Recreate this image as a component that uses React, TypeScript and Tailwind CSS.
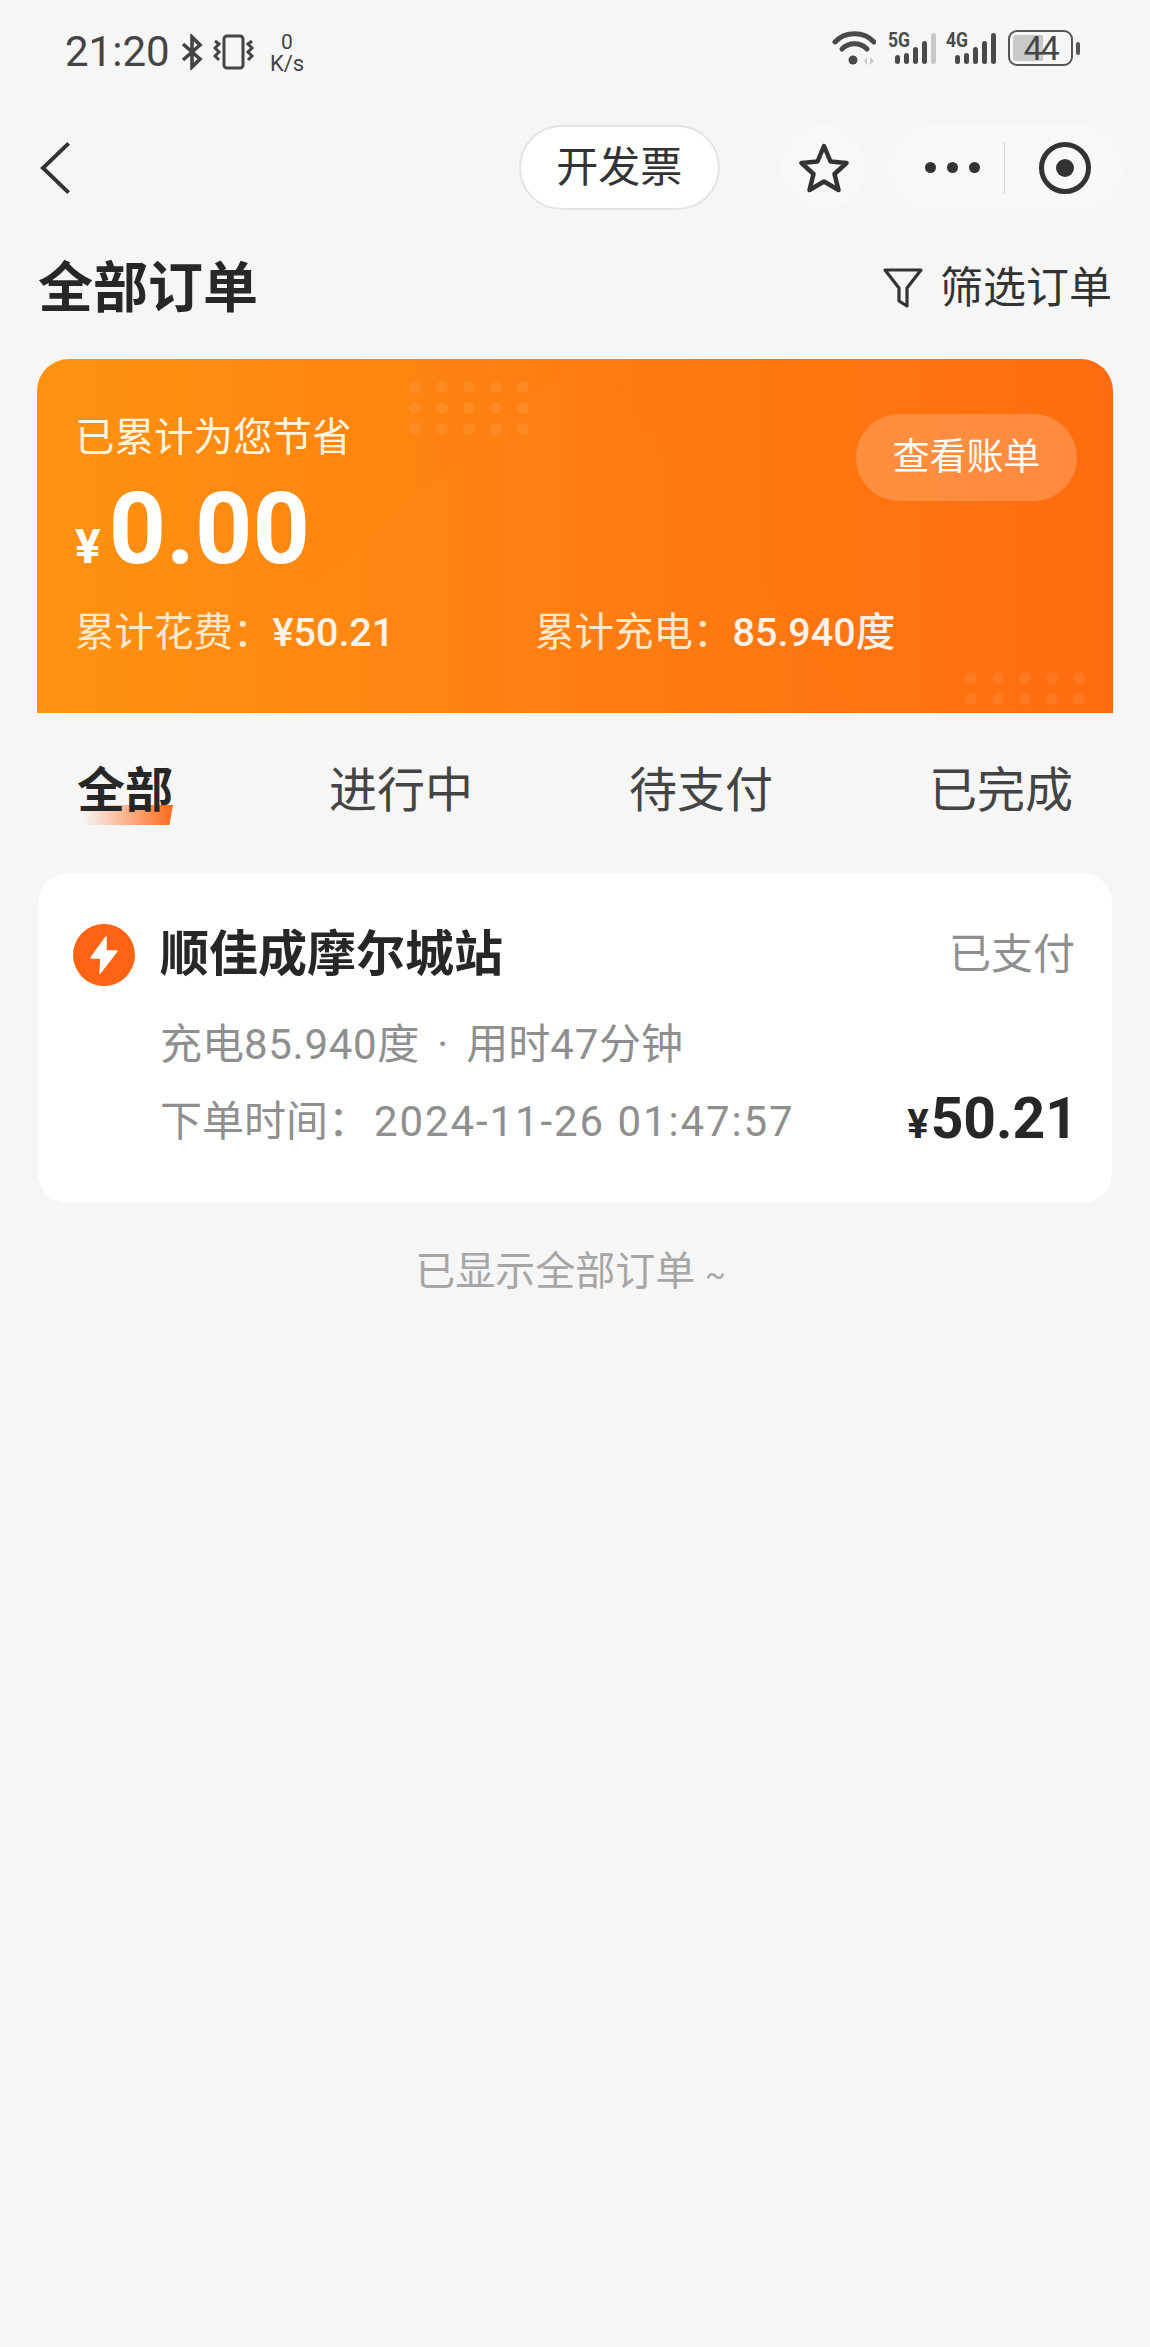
const cjk = "font-['Roboto','Noto_Sans_CJK_SC',sans-serif]"

function Dots({ className }: { className: string }) {
  return (
    <div className={`absolute grid grid-cols-5 gap-x-[15px] gap-y-[9px] ${className}`}>
      {Array.from({ length: 15 }).map((_, i) => (
        <span key={i} className="w-[12px] h-[12px] rounded-full bg-white/[0.08]" />
      ))}
    </div>
  )
}

function Signal({ label, dim }: { label: string; dim?: boolean }) {
  return (
    <svg width="48" height="36" viewBox="0 0 48 36" className="block overflow-visible">
      <text x={label === '4G' ? -2 : 0} y="17" fontSize="21" fontWeight="700" fill="#4a4a4a" fontFamily="Roboto" textLength="22" lengthAdjust="spacingAndGlyphs">{label}</text>
      <rect x="7" y="25" width="5" height="9" rx="2.5" fill="#4a4a4a" />
      <rect x="16" y="23" width="5" height="11" rx="2.5" fill="#4a4a4a" />
      <rect x="25" y="17" width="5" height="17" rx="2.5" fill="#4a4a4a" />
      <rect x="34" y="11" width="5" height="23" rx="2.5" fill="#4a4a4a" />
      <rect x="43" y="3" width="5" height="31" rx="2.5" fill={dim ? '#c9c9c9' : '#4a4a4a'} />
    </svg>
  )
}

function StatusBar() {
  return (
    <div className="h-[83px] pt-[29px] pl-[65px] pr-[70px] flex items-start justify-between text-[#444]">
      <div className="flex items-center">
        <span className="font-['Roboto',sans-serif] text-[42px] leading-[40px] w-[116px]">21:20</span>
        <svg width="22" height="36" viewBox="0 0 22 36" fill="none" stroke="#444" strokeWidth="3.6">
          <path d="M2 10 L19 25 L11 33 V3 L19 11 L2 26" />
        </svg>
        <svg width="42" height="36" viewBox="0 0 42 36" fill="none" stroke="#444" strokeWidth="3" className="ml-[10px]">
          <rect x="11" y="2" width="19" height="32" rx="3" />
          <path d="M2 7 L6 10 L2 14 L6 18 L2 22 L6 26 M39 7 L35 10 L39 14 L35 18 L39 22 L35 26" />
        </svg>
        <div className="ml-[15px] w-[34px] flex flex-col items-center font-['Roboto',sans-serif] text-[21px] leading-[22px] mt-[2px]">
          <span>0</span>
          <span className="text-[22px]">K/s</span>
        </div>
      </div>
      <div className="flex items-center gap-[12px] mt-[1px]">
        <svg width="44" height="36" viewBox="0 0 44 36" fill="none" stroke="#4a4a4a" strokeWidth="5" strokeLinecap="round">
          <path d="M3 12 C13 1 32 1 42 12" />
          <path d="M10 19 C17 12 28 12 35 19" />
          <circle cx="21" cy="30" r="4.5" fill="#4a4a4a" stroke="none" />
          <path d="M32 31 L35 27 V35 Z M38 27 V35 L42 31 Z" fill="#c9c9c9" stroke="none" />
        </svg>
        <Signal label="5G" dim />
        <Signal label="4G" />
        <div className="flex items-center">
          <div className="relative w-[65px] h-[36px] border-[2.5px] border-[#555] rounded-[9px] flex items-center justify-center">
            <span className="absolute left-[3px] top-[3px] bottom-[3px] w-[30px] bg-[#c9c9c9] rounded-l-[3px]" />
            <span className="relative font-['Roboto',sans-serif] text-[34px] leading-none tracking-[-2px]">44</span>
          </div>
          <span className="ml-[3px] w-[4px] h-[13px] rounded-full bg-[#555]" />
        </div>
      </div>
    </div>
  )
}

function NavBar() {
  return (
    <div className="h-[85px] mt-[42px] pl-[38px] pr-[27px] flex items-center">
      <svg width="34" height="54" viewBox="0 0 34 54" fill="none" stroke="#333" strokeWidth="4">
        <path d="M31 2 L5 27 L31 52" />
      </svg>
      <button className={`ml-[447px] w-[204px] h-[85px] rounded-full bg-white border-[2px] border-[#e4e4e4] text-[#333] text-[42px] leading-none ${cjk}`}>
        开发票
      </button>
      <div className="ml-[61px] w-[86px] h-[85px] rounded-full bg-[#f8f8f8] flex items-center justify-center">
        <svg width="50" height="50" viewBox="0 0 50 50" fill="none" stroke="#333" strokeWidth="4.5" strokeLinejoin="round">
          <path d="M25 3 L31.5 18.5 L47.5 20 L35.5 31 L39.5 47 L25 38.5 L10.5 47 L14.5 31 L2.5 20 L18.5 18.5 Z" />
        </svg>
      </div>
      <div className="ml-[22px] w-[238px] h-[85px] rounded-full bg-[#f8f8f8] flex items-center">
        <div className="ml-[37px] flex gap-[11px]">
          <span className="w-[11px] h-[11px] rounded-full bg-[#333]" />
          <span className="w-[11px] h-[11px] rounded-full bg-[#333]" />
          <span className="w-[11px] h-[11px] rounded-full bg-[#333]" />
        </div>
        <span className="ml-[24px] w-px h-[52px] bg-[#d6d6d6]" />
        <span className="ml-[34px] w-[52px] h-[52px] rounded-full border-[5px] border-[#333] flex items-center justify-center">
          <span className="w-[18px] h-[18px] rounded-full bg-[#333]" />
        </span>
      </div>
    </div>
  )
}

function Tab({ label, active }: { label: string; active?: boolean }) {
  return (
    <div className={`relative text-[48px] leading-[60px] ${active ? 'font-bold text-[#272727]' : 'text-[#444]'}`}>
      {active && (
        <span className="absolute left-[6px] bottom-[-4px] w-[90px] h-[20px] bg-gradient-to-r from-[#ff6a1a00] to-[#ff6a1a] [clip-path:polygon(0_0,100%_0,96%_100%,0_100%)]" />
      )}
      <span className="relative">{label}</span>
    </div>
  )
}

export default function App() {
  return (
    <div className={`w-[1150px] h-[2347px] bg-[#f6f6f6] overflow-hidden ${cjk}`}>
      <StatusBar />
      <NavBar />

      <div className="mt-[43px] px-[38px] flex items-center justify-between">
        <h1 className="text-[55px] leading-[70px] font-bold text-[#272727]">全部订单</h1>
        <div className="flex items-center gap-[16px] text-[#333] text-[43px] leading-[60px]">
          <svg width="42" height="44" viewBox="0 0 42 44" fill="none" stroke="#333" strokeWidth="3.2" strokeLinejoin="round">
            <path d="M3 4 H39 L25 22 V40 L17 35 V22 Z" />
          </svg>
          <span>筛选订单</span>
        </div>
      </div>

      <div className="relative mx-[37px] mt-[36px] h-[354px] rounded-t-[32px] overflow-hidden bg-gradient-to-r from-[#ff9210] via-[#ff7d10] to-[#ff6c0f] text-white">
        <div className="absolute inset-0 bg-white/[0.012] [clip-path:polygon(12%_100%,50%_0,52%_0,76%_100%)]" />
        <Dots className="left-[372px] top-[22px]" />
        <Dots className="left-[928px] top-[313px]" />
        <div className="absolute right-[36px] top-[55px] w-[221px] h-[87px] rounded-full bg-white/20 flex items-center justify-center text-[37px] leading-none">
          查看账单
        </div>
        <div className="relative pl-[38px] pt-[54px]">
          <div className="text-[39.5px] leading-[50px] text-[#fff4e0]">已累计为您节省</div>
          <div className="flex items-baseline mt-[19px] h-[94px] font-['Roboto',sans-serif] font-bold leading-[94px]">
            <span className="text-[48px]">¥</span>
            <span className="text-[100px] ml-[8px]">0.00</span>
          </div>
          <div className="flex mt-[32px] text-[39.5px] leading-[50px] text-[#ffe8cc]">
            <div className="w-[460px]">累计花费：<span className="font-medium text-white/90">¥50.21</span></div>
            <div>累计充电：<span className="font-medium text-white/90">85.940度</span></div>
          </div>
        </div>
      </div>

      <div className="mt-[48px] pl-[77px] pr-[77px] flex justify-between">
        <Tab label="全部" active />
        <Tab label="进行中" />
        <Tab label="待支付" />
        <Tab label="已完成" />
      </div>

      <div className="mx-[38px] mt-[52px] h-[330px] rounded-[30px] bg-white pl-[35px] pr-[37px] pt-[47px]">
        <div className="flex items-center h-[70px]">
          <span className="w-[62px] h-[62px] rounded-full bg-[#ff6313] flex items-center justify-center">
            <svg width="30" height="38" viewBox="0 0 30 38" fill="white" stroke="white" strokeWidth="1.5" strokeLinejoin="round">
              <path d="M17 1 L2 22 H12 L11 37 L28 15 H17 Z" />
            </svg>
          </span>
          <span className="ml-[25px] text-[49px] font-bold text-[#272727] leading-[70px]">顺佳成摩尔城站</span>
          <span className="ml-auto text-[42px] text-[#8f8f8f] leading-[70px]">已支付</span>
        </div>
        <div className="pl-[87px] mt-[27px] text-[42px] leading-[56px] text-[#8f8f8f] flex">
          <span>充电<span className="tracking-[0.7px]">85.940</span>度</span>
          <span className="mx-[18px]">·</span>
          <span>用时<span className="tracking-[0.7px]">47</span>分钟</span>
        </div>
        <div className="pl-[87px] mt-[18px] flex items-center justify-between text-[42px] leading-[56px] text-[#8f8f8f]">
          <span>下单时间：<span className="ml-[4px] tracking-[1.9px]">2024-11-26 01:47:57</span></span>
          <span className="font-['Roboto',sans-serif] font-bold text-[#272727] flex items-baseline mr-[-3px]">
            <span className="text-[40px]">¥</span>
            <span className="text-[57px] ml-[2px]">50.21</span>
          </span>
        </div>
      </div>

      <div className="mt-[41px] pr-[9px] text-center text-[40px] leading-[56px] text-[#a6a6a6]">已显示全部订单 <span className="text-[30px]">~</span></div>
    </div>
  )
}
